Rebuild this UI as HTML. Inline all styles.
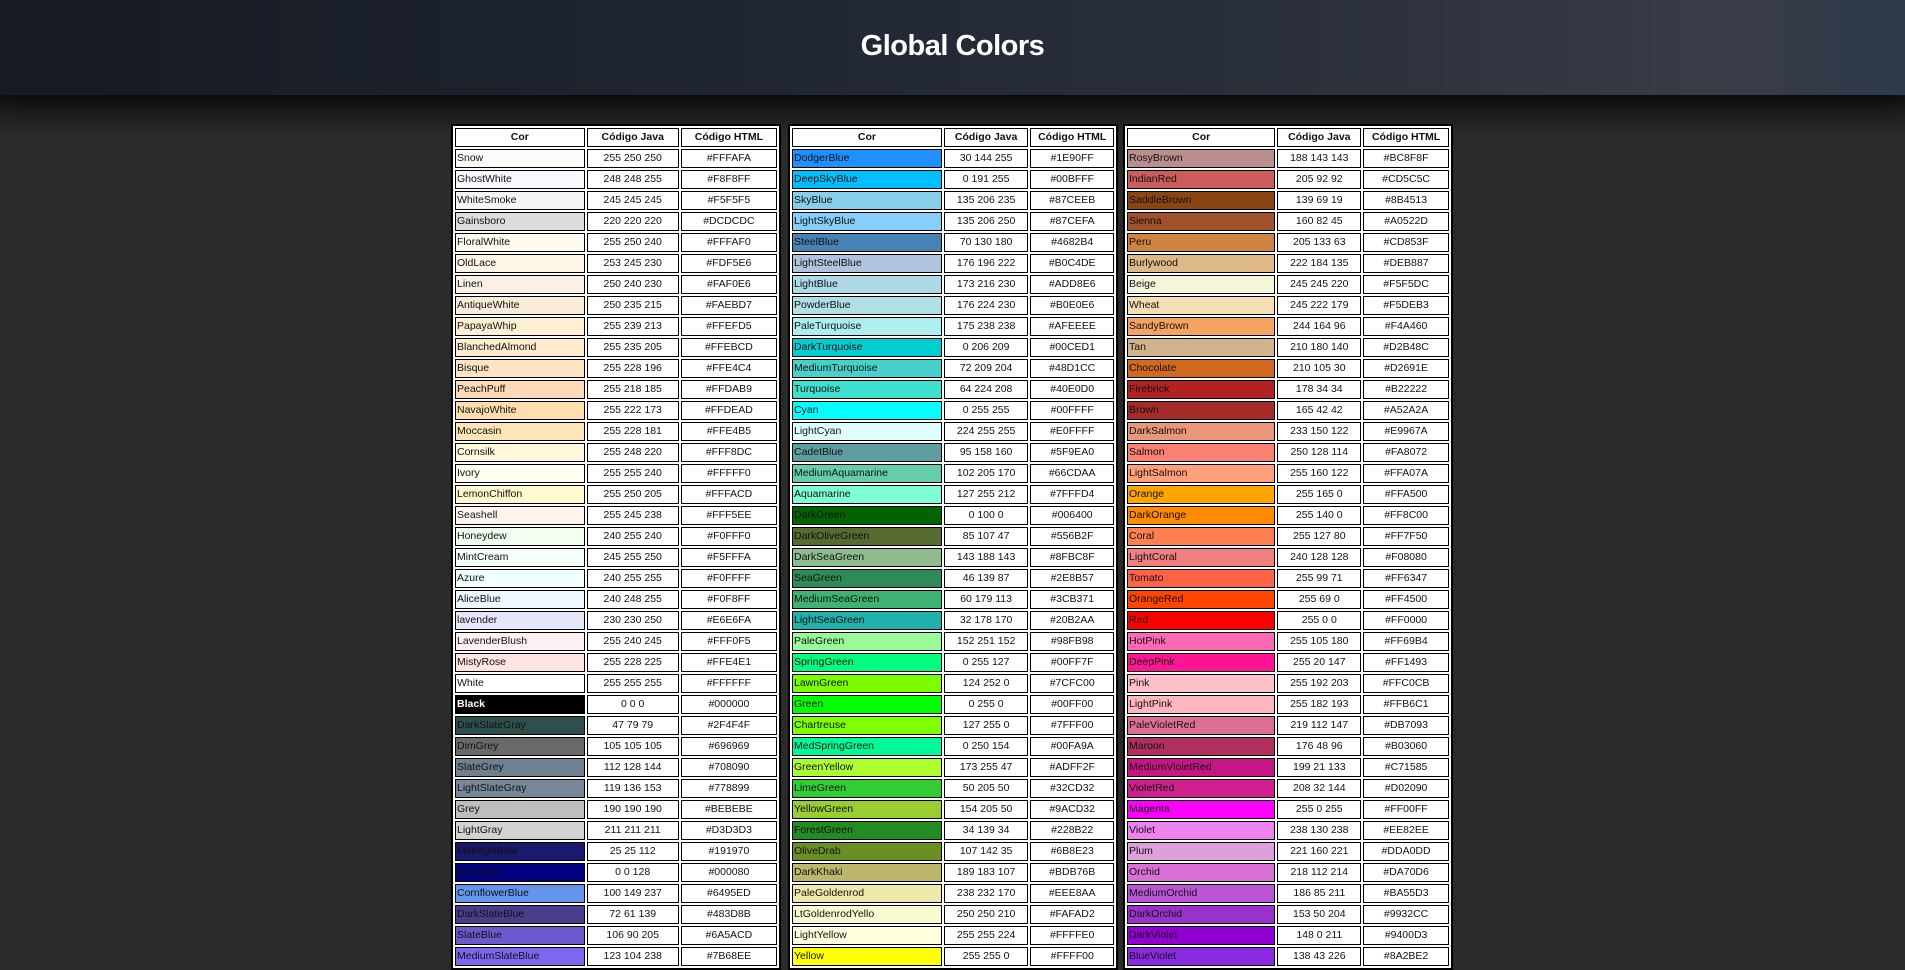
<!DOCTYPE html>
<html><head><meta charset="utf-8"><style>
html,body{margin:0;padding:0;width:1905px;height:960px;overflow:hidden;background:#2a2a2a;font-family:"Liberation Sans",sans-serif}
.hdr{position:absolute;left:0;top:0;width:1905px;height:95px;background:linear-gradient(90deg,#161a22 0%,#1e2530 35%,#252c37 55%,#2e333d 75%,#3a3c47 90%,#2e3a4a 100%);box-shadow:0 6px 24px rgba(0,0,0,.8);z-index:2}
.hdr h1{margin:0;position:absolute;left:0;right:0;top:30px;text-align:center;color:#fff;font-size:29px;font-weight:bold;letter-spacing:-0.5px}
.shade{position:absolute;left:0;top:95px;width:1905px;height:40px;background:linear-gradient(#181818,#2a2a2a)}
table{position:absolute;top:124px;background:#fff;border:2px solid #000;border-spacing:2px;table-layout:fixed;font-size:10.5px;color:#111}
td,th{border:1px solid #000;height:17px;padding:0 1px;text-align:center;white-space:nowrap;overflow:hidden;line-height:17px}
td:first-child{text-align:left}
th{font-weight:bold;font-size:10.5px}
</style></head><body>
<div class="hdr"><h1>Global Colors</h1></div>
<div class="shade"></div>

<table style="left:451px;width:330px">
<colgroup><col style="width:128px"><col style="width:91px"><col style="width:95px"></colgroup>
<tr><th>Cor</th><th>Código Java</th><th>Código HTML</th></tr>
<tr><td style="background:#FFFAFA">Snow</td><td>255 250 250</td><td>#FFFAFA</td></tr>
<tr><td style="background:#F8F8FF">GhostWhite</td><td>248 248 255</td><td>#F8F8FF</td></tr>
<tr><td style="background:#F5F5F5">WhiteSmoke</td><td>245 245 245</td><td>#F5F5F5</td></tr>
<tr><td style="background:#DCDCDC">Gainsboro</td><td>220 220 220</td><td>#DCDCDC</td></tr>
<tr><td style="background:#FFFAF0">FloralWhite</td><td>255 250 240</td><td>#FFFAF0</td></tr>
<tr><td style="background:#FDF5E6">OldLace</td><td>253 245 230</td><td>#FDF5E6</td></tr>
<tr><td style="background:#FAF0E6">Linen</td><td>250 240 230</td><td>#FAF0E6</td></tr>
<tr><td style="background:#FAEBD7">AntiqueWhite</td><td>250 235 215</td><td>#FAEBD7</td></tr>
<tr><td style="background:#FFEFD5">PapayaWhip</td><td>255 239 213</td><td>#FFEFD5</td></tr>
<tr><td style="background:#FFEBCD">BlanchedAlmond</td><td>255 235 205</td><td>#FFEBCD</td></tr>
<tr><td style="background:#FFE4C4">Bisque</td><td>255 228 196</td><td>#FFE4C4</td></tr>
<tr><td style="background:#FFDAB9">PeachPuff</td><td>255 218 185</td><td>#FFDAB9</td></tr>
<tr><td style="background:#FFDEAD">NavajoWhite</td><td>255 222 173</td><td>#FFDEAD</td></tr>
<tr><td style="background:#FFE4B5">Moccasin</td><td>255 228 181</td><td>#FFE4B5</td></tr>
<tr><td style="background:#FFF8DC">Cornsilk</td><td>255 248 220</td><td>#FFF8DC</td></tr>
<tr><td style="background:#FFFFF0">Ivory</td><td>255 255 240</td><td>#FFFFF0</td></tr>
<tr><td style="background:#FFFACD">LemonChiffon</td><td>255 250 205</td><td>#FFFACD</td></tr>
<tr><td style="background:#FFF5EE">Seashell</td><td>255 245 238</td><td>#FFF5EE</td></tr>
<tr><td style="background:#F0FFF0">Honeydew</td><td>240 255 240</td><td>#F0FFF0</td></tr>
<tr><td style="background:#F5FFFA">MintCream</td><td>245 255 250</td><td>#F5FFFA</td></tr>
<tr><td style="background:#F0FFFF">Azure</td><td>240 255 255</td><td>#F0FFFF</td></tr>
<tr><td style="background:#F0F8FF">AliceBlue</td><td>240 248 255</td><td>#F0F8FF</td></tr>
<tr><td style="background:#E6E6FA">lavender</td><td>230 230 250</td><td>#E6E6FA</td></tr>
<tr><td style="background:#FFF0F5">LavenderBlush</td><td>255 240 245</td><td>#FFF0F5</td></tr>
<tr><td style="background:#FFE4E1">MistyRose</td><td>255 228 225</td><td>#FFE4E1</td></tr>
<tr><td style="background:#FFFFFF">White</td><td>255 255 255</td><td>#FFFFFF</td></tr>
<tr><td style="background:#000000;color:#fff;font-weight:bold">Black</td><td>0 0 0</td><td>#000000</td></tr>
<tr><td style="background:#2F4F4F">DarkSlateGray</td><td>47 79 79</td><td>#2F4F4F</td></tr>
<tr><td style="background:#696969">DimGrey</td><td>105 105 105</td><td>#696969</td></tr>
<tr><td style="background:#708090">SlateGrey</td><td>112 128 144</td><td>#708090</td></tr>
<tr><td style="background:#778899">LightSlateGray</td><td>119 136 153</td><td>#778899</td></tr>
<tr><td style="background:#BEBEBE">Grey</td><td>190 190 190</td><td>#BEBEBE</td></tr>
<tr><td style="background:#D3D3D3">LightGray</td><td>211 211 211</td><td>#D3D3D3</td></tr>
<tr><td style="background:#191970">MidnightBlue</td><td>25 25 112</td><td>#191970</td></tr>
<tr><td style="background:#000080">NavyBlue</td><td>0 0 128</td><td>#000080</td></tr>
<tr><td style="background:#6495ED">CornflowerBlue</td><td>100 149 237</td><td>#6495ED</td></tr>
<tr><td style="background:#483D8B">DarkSlateBlue</td><td>72 61 139</td><td>#483D8B</td></tr>
<tr><td style="background:#6A5ACD">SlateBlue</td><td>106 90 205</td><td>#6A5ACD</td></tr>
<tr><td style="background:#7B68EE">MediumSlateBlue</td><td>123 104 238</td><td>#7B68EE</td></tr>
</table>

<table style="left:788px;width:330px">
<colgroup><col style="width:147px"><col style="width:83px"><col style="width:82px"></colgroup>
<tr><th>Cor</th><th>Código Java</th><th>Código HTML</th></tr>
<tr><td style="background:#1E90FF">DodgerBlue</td><td>30 144 255</td><td>#1E90FF</td></tr>
<tr><td style="background:#00BFFF">DeepSkyBlue</td><td>0 191 255</td><td>#00BFFF</td></tr>
<tr><td style="background:#87CEEB">SkyBlue</td><td>135 206 235</td><td>#87CEEB</td></tr>
<tr><td style="background:#87CEFA">LightSkyBlue</td><td>135 206 250</td><td>#87CEFA</td></tr>
<tr><td style="background:#4682B4">SteelBlue</td><td>70 130 180</td><td>#4682B4</td></tr>
<tr><td style="background:#B0C4DE">LightSteelBlue</td><td>176 196 222</td><td>#B0C4DE</td></tr>
<tr><td style="background:#ADD8E6">LightBlue</td><td>173 216 230</td><td>#ADD8E6</td></tr>
<tr><td style="background:#B0E0E6">PowderBlue</td><td>176 224 230</td><td>#B0E0E6</td></tr>
<tr><td style="background:#AFEEEE">PaleTurquoise</td><td>175 238 238</td><td>#AFEEEE</td></tr>
<tr><td style="background:#00CED1">DarkTurquoise</td><td>0 206 209</td><td>#00CED1</td></tr>
<tr><td style="background:#48D1CC">MediumTurquoise</td><td>72 209 204</td><td>#48D1CC</td></tr>
<tr><td style="background:#40E0D0">Turquoise</td><td>64 224 208</td><td>#40E0D0</td></tr>
<tr><td style="background:#00FFFF">Cyan</td><td>0 255 255</td><td>#00FFFF</td></tr>
<tr><td style="background:#E0FFFF">LightCyan</td><td>224 255 255</td><td>#E0FFFF</td></tr>
<tr><td style="background:#5F9EA0">CadetBlue</td><td>95 158 160</td><td>#5F9EA0</td></tr>
<tr><td style="background:#66CDAA">MediumAquamarine</td><td>102 205 170</td><td>#66CDAA</td></tr>
<tr><td style="background:#7FFFD4">Aquamarine</td><td>127 255 212</td><td>#7FFFD4</td></tr>
<tr><td style="background:#006400">DarkGreen</td><td>0 100 0</td><td>#006400</td></tr>
<tr><td style="background:#556B2F">DarkOliveGreen</td><td>85 107 47</td><td>#556B2F</td></tr>
<tr><td style="background:#8FBC8F">DarkSeaGreen</td><td>143 188 143</td><td>#8FBC8F</td></tr>
<tr><td style="background:#2E8B57">SeaGreen</td><td>46 139 87</td><td>#2E8B57</td></tr>
<tr><td style="background:#3CB371">MediumSeaGreen</td><td>60 179 113</td><td>#3CB371</td></tr>
<tr><td style="background:#20B2AA">LightSeaGreen</td><td>32 178 170</td><td>#20B2AA</td></tr>
<tr><td style="background:#98FB98">PaleGreen</td><td>152 251 152</td><td>#98FB98</td></tr>
<tr><td style="background:#00FF7F">SpringGreen</td><td>0 255 127</td><td>#00FF7F</td></tr>
<tr><td style="background:#7CFC00">LawnGreen</td><td>124 252 0</td><td>#7CFC00</td></tr>
<tr><td style="background:#00FF00">Green</td><td>0 255 0</td><td>#00FF00</td></tr>
<tr><td style="background:#7FFF00">Chartreuse</td><td>127 255 0</td><td>#7FFF00</td></tr>
<tr><td style="background:#00FA9A">MedSpringGreen</td><td>0 250 154</td><td>#00FA9A</td></tr>
<tr><td style="background:#ADFF2F">GreenYellow</td><td>173 255 47</td><td>#ADFF2F</td></tr>
<tr><td style="background:#32CD32">LimeGreen</td><td>50 205 50</td><td>#32CD32</td></tr>
<tr><td style="background:#9ACD32">YellowGreen</td><td>154 205 50</td><td>#9ACD32</td></tr>
<tr><td style="background:#228B22">ForestGreen</td><td>34 139 34</td><td>#228B22</td></tr>
<tr><td style="background:#6B8E23">OliveDrab</td><td>107 142 35</td><td>#6B8E23</td></tr>
<tr><td style="background:#BDB76B">DarkKhaki</td><td>189 183 107</td><td>#BDB76B</td></tr>
<tr><td style="background:#EEE8AA">PaleGoldenrod</td><td>238 232 170</td><td>#EEE8AA</td></tr>
<tr><td style="background:#FAFAD2">LtGoldenrodYello</td><td>250 250 210</td><td>#FAFAD2</td></tr>
<tr><td style="background:#FFFFE0">LightYellow</td><td>255 255 224</td><td>#FFFFE0</td></tr>
<tr><td style="background:#FFFF00">Yellow</td><td>255 255 0</td><td>#FFFF00</td></tr>
</table>

<table style="left:1123px;width:330px">
<colgroup><col style="width:147px"><col style="width:83px"><col style="width:85px"></colgroup>
<tr><th>Cor</th><th>Código Java</th><th>Código HTML</th></tr>
<tr><td style="background:#BC8F8F">RosyBrown</td><td>188 143 143</td><td>#BC8F8F</td></tr>
<tr><td style="background:#CD5C5C">IndianRed</td><td>205 92 92</td><td>#CD5C5C</td></tr>
<tr><td style="background:#8B4513">SaddleBrown</td><td>139 69 19</td><td>#8B4513</td></tr>
<tr><td style="background:#A0522D">Sienna</td><td>160 82 45</td><td>#A0522D</td></tr>
<tr><td style="background:#CD853F">Peru</td><td>205 133 63</td><td>#CD853F</td></tr>
<tr><td style="background:#DEB887">Burlywood</td><td>222 184 135</td><td>#DEB887</td></tr>
<tr><td style="background:#F5F5DC">Beige</td><td>245 245 220</td><td>#F5F5DC</td></tr>
<tr><td style="background:#F5DEB3">Wheat</td><td>245 222 179</td><td>#F5DEB3</td></tr>
<tr><td style="background:#F4A460">SandyBrown</td><td>244 164 96</td><td>#F4A460</td></tr>
<tr><td style="background:#D2B48C">Tan</td><td>210 180 140</td><td>#D2B48C</td></tr>
<tr><td style="background:#D2691E">Chocolate</td><td>210 105 30</td><td>#D2691E</td></tr>
<tr><td style="background:#B22222">Firebrick</td><td>178 34 34</td><td>#B22222</td></tr>
<tr><td style="background:#A52A2A">Brown</td><td>165 42 42</td><td>#A52A2A</td></tr>
<tr><td style="background:#E9967A">DarkSalmon</td><td>233 150 122</td><td>#E9967A</td></tr>
<tr><td style="background:#FA8072">Salmon</td><td>250 128 114</td><td>#FA8072</td></tr>
<tr><td style="background:#FFA07A">LightSalmon</td><td>255 160 122</td><td>#FFA07A</td></tr>
<tr><td style="background:#FFA500">Orange</td><td>255 165 0</td><td>#FFA500</td></tr>
<tr><td style="background:#FF8C00">DarkOrange</td><td>255 140 0</td><td>#FF8C00</td></tr>
<tr><td style="background:#FF7F50">Coral</td><td>255 127 80</td><td>#FF7F50</td></tr>
<tr><td style="background:#F08080">LightCoral</td><td>240 128 128</td><td>#F08080</td></tr>
<tr><td style="background:#FF6347">Tomato</td><td>255 99 71</td><td>#FF6347</td></tr>
<tr><td style="background:#FF4500">OrangeRed</td><td>255 69 0</td><td>#FF4500</td></tr>
<tr><td style="background:#FF0000">Red</td><td>255 0 0</td><td>#FF0000</td></tr>
<tr><td style="background:#FF69B4">HotPink</td><td>255 105 180</td><td>#FF69B4</td></tr>
<tr><td style="background:#FF1493">DeepPink</td><td>255 20 147</td><td>#FF1493</td></tr>
<tr><td style="background:#FFC0CB">Pink</td><td>255 192 203</td><td>#FFC0CB</td></tr>
<tr><td style="background:#FFB6C1">LightPink</td><td>255 182 193</td><td>#FFB6C1</td></tr>
<tr><td style="background:#DB7093">PaleVioletRed</td><td>219 112 147</td><td>#DB7093</td></tr>
<tr><td style="background:#B03060">Maroon</td><td>176 48 96</td><td>#B03060</td></tr>
<tr><td style="background:#C71585">MediumVioletRed</td><td>199 21 133</td><td>#C71585</td></tr>
<tr><td style="background:#D02090">VioletRed</td><td>208 32 144</td><td>#D02090</td></tr>
<tr><td style="background:#FF00FF">Magenta</td><td>255 0 255</td><td>#FF00FF</td></tr>
<tr><td style="background:#EE82EE">Violet</td><td>238 130 238</td><td>#EE82EE</td></tr>
<tr><td style="background:#DDA0DD">Plum</td><td>221 160 221</td><td>#DDA0DD</td></tr>
<tr><td style="background:#DA70D6">Orchid</td><td>218 112 214</td><td>#DA70D6</td></tr>
<tr><td style="background:#BA55D3">MediumOrchid</td><td>186 85 211</td><td>#BA55D3</td></tr>
<tr><td style="background:#9932CC">DarkOrchid</td><td>153 50 204</td><td>#9932CC</td></tr>
<tr><td style="background:#9400D3">DarkViolet</td><td>148 0 211</td><td>#9400D3</td></tr>
<tr><td style="background:#8A2BE2">BlueViolet</td><td>138 43 226</td><td>#8A2BE2</td></tr>
</table>
</body></html>
